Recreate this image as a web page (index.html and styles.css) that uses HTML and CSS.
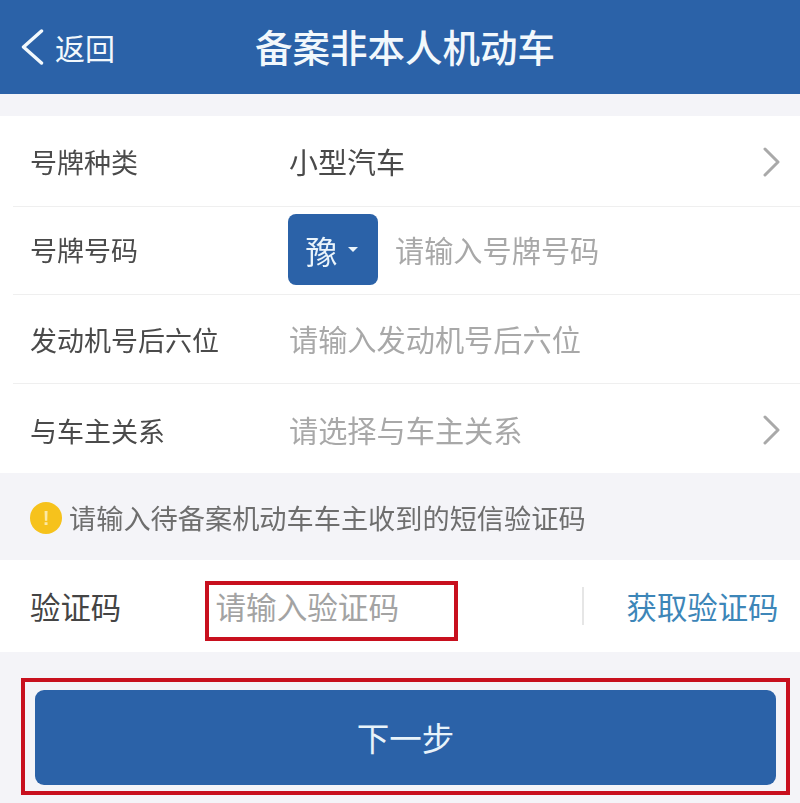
FILE: index.html
```html
<!DOCTYPE html>
<html lang="zh-CN">
<head>
<meta charset="utf-8">
<title>备案非本人机动车</title>
<link rel="stylesheet" href="styles.css">
</head>
<body>
<div class="page">
  <header class="topbar">
    <div class="back">
      <svg class="back-icon" viewBox="0 0 23 36" aria-hidden="true"><path d="M20.5 2 L2.5 18 L20.5 34"/></svg>
      <span>返回</span>
    </div>
    <h1 class="title">备案非本人机动车</h1>
  </header>

  <section class="form">
    <div class="row row-type">
      <div class="label">号牌种类</div>
      <div class="value">小型汽车</div>
      <svg class="chevron" viewBox="0 0 18 30" aria-hidden="true"><path d="M2 2 L15 15 L2 28"/></svg>
    </div>
    <div class="row row-plate">
      <div class="label">号牌号码</div>
      <div class="province"><span>豫</span><i class="caret"></i></div>
      <div class="placeholder plate">请输入号牌号码</div>
    </div>
    <div class="row row-engine">
      <div class="label">发动机号后六位</div>
      <div class="placeholder">请输入发动机号后六位</div>
    </div>
    <div class="row row-relation">
      <div class="label">与车主关系</div>
      <div class="placeholder">请选择与车主关系</div>
      <svg class="chevron" viewBox="0 0 18 30" aria-hidden="true"><path d="M2 2 L15 15 L2 28"/></svg>
    </div>
  </section>

  <div class="notice">
    <span class="notice-icon">!</span>
    <span>请输入待备案机动车车主收到的短信验证码</span>
  </div>

  <section class="code-row">
    <div class="code-label">验证码</div>
    <div class="code-input">请输入验证码</div>
    <div class="code-link">获取验证码</div>
    <div class="mark mark-input"></div>
  </section>

  <div class="action">
    <button class="next" type="button">下一步</button>
    <div class="mark mark-button"></div>
  </div>
</div>
</body>
</html>
```

FILE: styles.css
```css
* { box-sizing: border-box; }
html, body { margin: 0; padding: 0; }
body {
  width: 800px;
  height: 803px;
  overflow: hidden;
  background: #f4f4f8;
  font-family: "Noto Sans CJK SC", "Noto Sans", sans-serif;
}
.page {
  width: 800px;
  height: 803px;
  display: flex;
  flex-direction: column;
  filter: blur(0.6px);
}
.topbar {
  position: relative;
  height: 94px;
  flex: none;
  display: flex;
  align-items: center;
  justify-content: center;
  background: #2b62a8;
  color: #f2f8fc;
}
.back {
  position: absolute;
  left: 21px;
  top: 0;
  height: 100%;
  display: flex;
  align-items: center;
  gap: 11px;
  font-size: 30px;
  line-height: 1;
}
.back-icon {
  width: 23px;
  height: 36px;
  fill: none;
  stroke: #f2f8fc;
  stroke-width: 3.4;
  stroke-linecap: round;
  stroke-linejoin: round;
}
.title {
  margin: 0 0 2px 10px;
  font-size: 37.5px;
  font-weight: 500;
  line-height: 1;
}
.form {
  margin-top: 22px;
  height: 357px;
  flex: none;
  display: flex;
  flex-direction: column;
  background: #fff;
}
.row {
  position: relative;
  flex: none;
  display: flex;
  align-items: center;
  margin-left: 13px;
  padding-left: 17px;
  padding-right: 19px;
  border-bottom: 1.5px solid #efefef;
}
.row-type { height: 91px; padding-top: 1px; }
.row-plate { height: 88px; padding-bottom: 2px; }
.row-engine { height: 89px; }
.row-relation { height: 89px; padding-top: 3px; border-bottom: 0; }
.label {
  width: 259px;
  flex: none;
  font-size: 27px;
  color: #4a4a4a;
  line-height: 1;
}
.value {
  flex: 1;
  font-size: 29px;
  color: #4a4a4a;
  line-height: 1;
}
.placeholder {
  flex: 1;
  font-size: 29.2px;
  color: #a8a8a8;
  line-height: 1;
}
.plate { margin-left: 17px; }
.chevron {
  width: 18px;
  height: 30px;
  flex: none;
  fill: none;
  stroke: #a9a9a9;
  stroke-width: 3;
  stroke-linecap: round;
  stroke-linejoin: round;
}
.province {
  width: 90px;
  height: 71px;
  margin-left: -1px;
  flex: none;
  display: flex;
  align-items: center;
  justify-content: center;
  gap: 10px;
  padding-right: 3px;
  border-radius: 8px;
  background: #2b62a8;
  color: #eaf4fb;
  font-size: 32px;
  line-height: 1;
}
.caret {
  width: 0;
  height: 0;
  border-left: 5px solid transparent;
  border-right: 5px solid transparent;
  border-top: 5px solid #eaf4fb;
}
.notice {
  height: 87px;
  flex: none;
  display: flex;
  align-items: center;
  gap: 7px;
  padding: 2px 0 0 30px;
  font-size: 27.2px;
  line-height: 1;
  color: #6e6e6e;
}
.notice-icon {
  width: 32px;
  height: 32px;
  flex: none;
  display: flex;
  align-items: center;
  justify-content: center;
  border-radius: 50%;
  background: #f6c21c;
  color: #fbe9a6;
  font-size: 20px;
  font-weight: 700;
  font-family: "Liberation Sans", sans-serif;
}
.code-row {
  position: relative;
  height: 92px;
  flex: none;
  display: flex;
  align-items: center;
  padding-left: 30px;
  background: #fff;
}
.code-label {
  width: 185.5px;
  flex: none;
  font-size: 30.4px;
  color: #444;
  line-height: 1;
}
.code-input {
  width: 366px;
  flex: none;
  height: 38px;
  font-size: 30.6px;
  line-height: 38px;
  color: #a3a3a3;
}
.code-link {
  flex: none;
  width: 197px;
  height: 38px;
  border-left: 2px solid #e6e6e6;
  padding-left: 43px;
  font-size: 30.4px;
  line-height: 38px;
  color: #3d86b8;
  white-space: nowrap;
}
.mark {
  position: absolute;
  border: 4px solid #c8101e;
  pointer-events: none;
}
.mark-input {
  left: 205px;
  top: 21px;
  width: 253px;
  height: 60px;
}
.action {
  position: relative;
  flex: 1;
  padding: 38px 24px 18px 35px;
}
.next {
  display: block;
  width: 741px;
  height: 95px;
  border: 0;
  padding: 0;
  border-radius: 9px;
  background: #2b62a8;
  color: #e8f3fa;
  font-family: inherit;
  font-size: 32.5px;
  font-weight: 400;
  line-height: 1;
}
.mark-button {
  left: 21px;
  top: 26px;
  width: 769px;
  height: 117px;
}
```
